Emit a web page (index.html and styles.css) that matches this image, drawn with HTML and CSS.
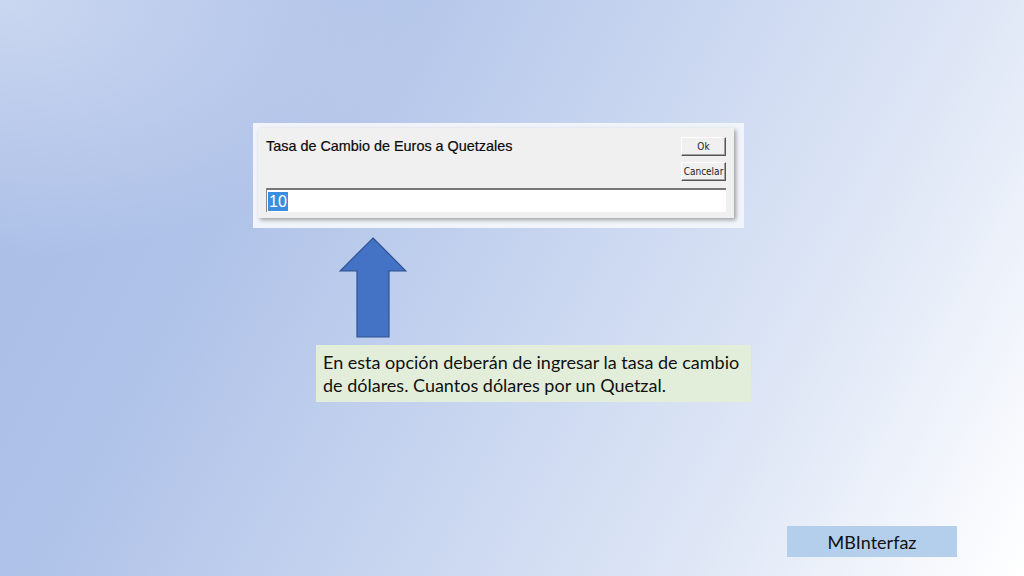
FILE: index.html
```html
<!DOCTYPE html>
<html lang="es">
<head>
<meta charset="utf-8">
<title>MBInterfaz</title>
<link rel="stylesheet" href="styles.css">
</head>
<body>
<div class="slide">
  <div class="shot">
    <div class="dialog">
      <div class="top-row">
        <div class="dlg-title">Tasa de Cambio de Euros a Quetzales</div>
        <div class="btns">
          <div class="btn">Ok</div>
          <div class="btn">Cancelar</div>
        </div>
      </div>
      <div class="field"><span class="sel">10</span></div>
    </div>
  </div>
  <svg class="arrow" width="68" height="102" viewBox="0 0 68 102">
    <polygon points="34,1 67,34 50,34 50,100 18,100 18,34 1,34" fill="#4472c4" stroke="#2f528f" stroke-width="1.2"/>
  </svg>
  <div class="note">En esta opción deberán de ingresar la tasa de cambio de dólares. Cuantos dólares por un Quetzal.</div>
  <div class="brand">MBInterfaz</div>
</div>
</body>
</html>
```
FILE: styles.css
```css
html, body { margin: 0; padding: 0; }
body { width: 1024px; height: 576px; overflow: hidden; }
.slide {
  width: 1024px; height: 576px; box-sizing: border-box;
  display: flex; flex-direction: column; align-items: flex-start;
  padding: 123px 67px 19px 0;
  background:
    radial-gradient(ellipse 420px 260px at 0 0, rgba(214,224,244,0.75), rgba(214,224,244,0) 100%),
    linear-gradient(118deg, #a9bde6 0%, #afc2e8 25%, #c6d4ef 50%, #dfe7f6 75%, #ffffff 100%);
  font-family: "Lato", "Open Sans", sans-serif;
}
.shot {
  margin-left: 253px; width: 491px; height: 105px; box-sizing: border-box;
  background: #f1f4fa; padding: 5px 10px 10px 5px;
}
.dialog {
  height: 90px; background: #f0f0f0; box-sizing: border-box;
  box-shadow: 2px 2px 4px rgba(0,0,0,0.35);
  padding: 9px 8px 5px 8px;
  display: flex; flex-direction: column;
}
.top-row { display: flex; justify-content: space-between; align-items: flex-start; }
.dlg-title {
  font-family: "Liberation Sans", Arial, sans-serif; font-size: 14.4px; color: #0a0a0a;
  padding-top: 1px; line-height: 16px; -webkit-text-stroke: 0.2px #0a0a0a;
}
.btns { display: flex; flex-direction: column; gap: 6px; }
.btn {
  width: 45px; height: 19px; box-sizing: border-box;
  border: 1px solid; border-color: #fff #555 #555 #fff;
  box-shadow: inset -1px -1px 0 #a0a0a0;
  font-family: "DejaVu Sans Condensed", "Liberation Sans Narrow", sans-serif; font-size: 10px; color: #222;
  display: flex; align-items: center; justify-content: center;
}
.field {
  margin-top: 7px; height: 24px; background: #fff; box-sizing: border-box;
  border-top: 2px solid #777; border-left: 1px solid #888;
  padding: 1px 0 0 1px;
}
.sel {
  display: inline-block; background: #3a8ddf; color: #fff;
  font-family: "Liberation Sans", Arial, sans-serif; font-size: 16px; line-height: 19px; padding: 0 1px;
}
.arrow { margin-left: 339px; margin-top: 9px; display: block; }
.note {
  margin-left: 316px; margin-top: 6px; width: 435px; height: 57px; box-sizing: border-box;
  background: #e2eed9; padding: 6px 6px 0 7px;
  font-size: 18px; line-height: 23px; color: #111;
}
.brand {
  margin-top: auto; align-self: flex-end;
  width: 170px; height: 31px; background: #b3cfec;
  display: flex; align-items: center; justify-content: center;
  font-size: 18px; color: #111;
}
```
